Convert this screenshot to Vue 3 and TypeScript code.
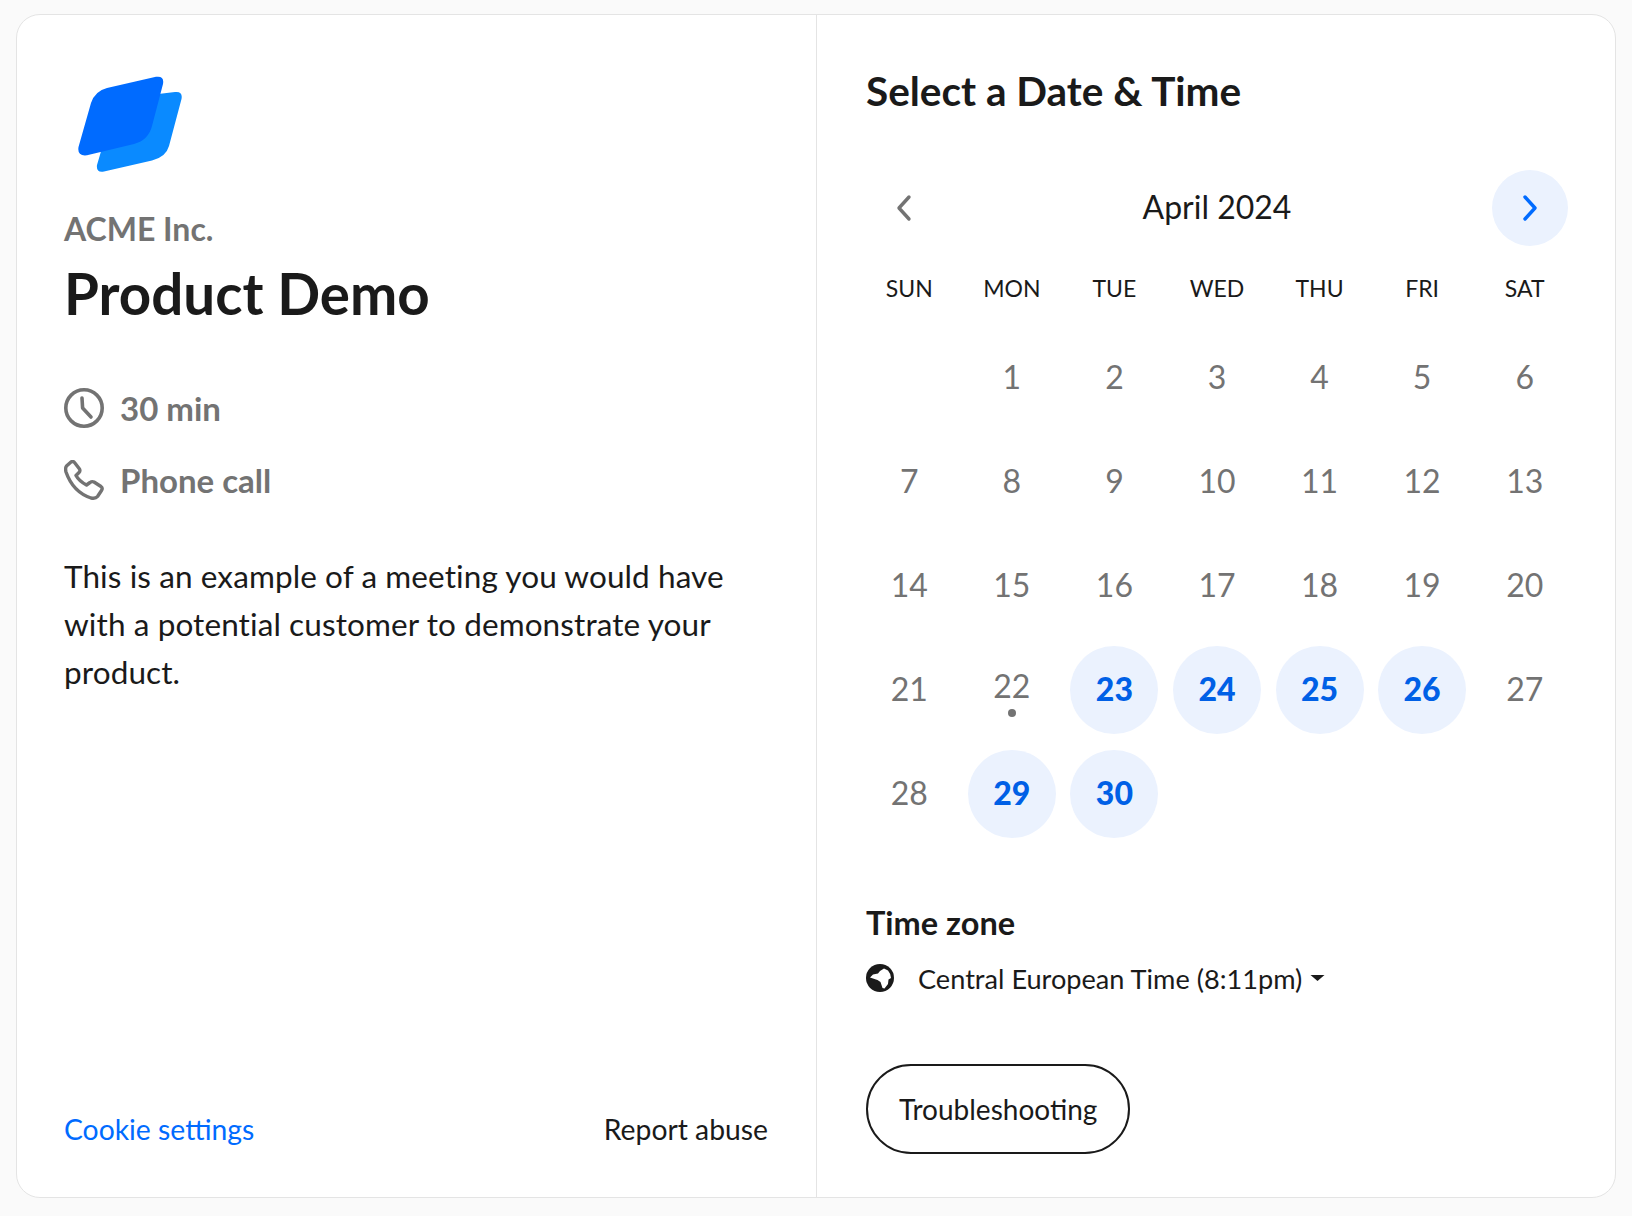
<script setup lang="ts">
interface Day { n: number | null; on?: boolean; today?: boolean }
const weekdays = ['SUN', 'MON', 'TUE', 'WED', 'THU', 'FRI', 'SAT']
const open = [23, 24, 25, 26, 29, 30]
const days: Day[] = [{ n: null }]
for (let n = 1; n <= 30; n++) days.push({ n, on: open.includes(n), today: n === 22 })
</script>

<template>
  <main class="card">
    <section class="info">
      <svg class="logo" width="104" height="96" viewBox="78 76 104 96">
        <path fill="#0a8aff" d="M150 95 L175 92 Q183 91 181.5 99 L169 146 Q166 157 152 160.5 L104 171.5 Q96 173 97 165 L102 148 L150 120 Z" />
        <path fill="#006bff" d="M156 76.8 Q164.5 75.5 163 84 L152 126 Q148.5 140 134 144 L87 155.3 Q77 156.5 78.5 147 L91 103 Q95 91 107 88 Z" />
      </svg>
      <p class="org">ACME Inc.</p>
      <h1 class="name">Product Demo</h1>
      <div class="meta">
        <div class="meta-row">
          <svg width="40" height="40" viewBox="0 0 40 40" fill="none" stroke="#737373" stroke-width="3.6" stroke-linecap="round" stroke-linejoin="round">
            <circle cx="20" cy="20" r="18.2" />
            <path d="M18 10 L18.6 20 L27 29" />
          </svg>
          <span>30 min</span>
        </div>
        <div class="meta-row">
          <svg width="40" height="40" viewBox="0 0 40 40" fill="none" stroke="#737373" stroke-width="3.4" stroke-linecap="round" stroke-linejoin="round">
            <path d="M2.5 6 L7 2 Q9 0.8 10.5 2.5 L15.5 9 Q16.5 11 15 12.5 L12 15.5 Q15 21 22.5 25 L26 22.5 Q28 21 30 22 L37 26.5 Q39 28 37.5 30.5 L33.5 36.5 Q31.5 39 27 38 Q9 32 2 12 Q1 8 2.5 6 Z" />
          </svg>
          <span>Phone call</span>
        </div>
      </div>
      <p class="desc">This is an example of a meeting you would have with a potential customer to demonstrate your product.</p>
      <footer class="links">
        <a class="cookie">Cookie settings</a>
        <a class="report">Report abuse</a>
      </footer>
    </section>

    <section class="picker">
      <h2 class="title">Select a Date &amp; Time</h2>
      <div class="calendar">
        <div class="month">
          <button class="nav">
            <svg width="20" height="28" viewBox="0 0 20 28" fill="none" stroke="#737373" stroke-width="3.4" stroke-linecap="round" stroke-linejoin="round"><path d="M15 3 L5 14 L15 25" /></svg>
          </button>
          <span class="month-label">April 2024</span>
          <button class="nav nav-next">
            <svg width="20" height="28" viewBox="0 0 20 28" fill="none" stroke="#006bff" stroke-width="3.4" stroke-linecap="round" stroke-linejoin="round"><path d="M5 3 L15 14 L5 25" /></svg>
          </button>
        </div>
        <div class="weekdays">
          <span v-for="w in weekdays" :key="w">{{ w }}</span>
        </div>
        <div class="days">
          <div v-for="(d, i) in days" :key="i" class="cell">
            <span v-if="d.n" class="day" :class="{ on: d.on, today: d.today }">{{ d.n }}</span>
          </div>
        </div>
      </div>
      <h3 class="tz-title">Time zone</h3>
      <div class="tz">
        <svg width="28" height="28" viewBox="0 0 28 28">
          <circle cx="14" cy="14" r="14" fill="#1a1a1a" />
          <path fill="#fff" d="M18 4.5 L22 6.5 Q25 10 25 14 L22.5 15.5 L22 20 L18.5 24.5 L16.5 24 L14.5 18 L11.5 16 L4 13.5 L7 10.5 L12 9.5 L14 7 Z" />
        </svg>
        <span class="tz-name">Central European Time (8:11pm)</span>
        <svg class="caret" width="15" height="6" viewBox="0 0 15 6"><path fill="#1a1a1a" d="M0.5 0 H14.5 L7.5 6 Z" /></svg>
      </div>
      <button class="trouble">Troubleshooting</button>
    </section>
  </main>
</template>

<style scoped>
.card {
  box-sizing: border-box;
  display: flex;
  width: 1600px;
  height: 1184px;
  margin: 14px 16px 0;
  background: #fff;
  border: 1.5px solid #e4e4e4;
  border-radius: 24px;
  color: #1a1a1a;
  font-family: Lato, "Open Sans", sans-serif;
}
.info {
  box-sizing: border-box;
  width: 800px;
  flex: none;
  display: flex;
  flex-direction: column;
  padding: 61px 48px 48px 47px;
  border-right: 1.5px solid #e4e4e4;
}
.logo { display: block; margin-left: 14px; }
.org {
  margin: 37px 0 0;
  font-size: 32px;
  line-height: 40px;
  font-weight: 700;
  color: #737373;
}
.name {
  margin: 13px 0 0;
  font-size: 56.5px;
  line-height: 62px;
  font-weight: 700;
}
.meta { margin-top: 64px; display: flex; flex-direction: column; gap: 32px; }
.meta-row {
  display: flex;
  align-items: center;
  gap: 16px;
  height: 40px;
  font-size: 33px;
  font-weight: 700;
  color: #737373;
}
.desc {
  margin: 52px 0 0;
  max-width: 690px;
  font-size: 31.5px;
  letter-spacing: 0.1px;
  line-height: 48px;
}
.links {
  margin-top: auto;
  display: flex;
  justify-content: space-between;
  font-size: 28.3px;
  line-height: 40px;
}
.cookie { color: #006bff; }
.picker {
  flex: 1;
  min-width: 0;
  display: flex;
  flex-direction: column;
  padding: 52px 38px 0 49px;
}
.title {
  margin: 0;
  font-size: 40.5px;
  line-height: 48px;
  font-weight: 700;
}
.calendar { margin: 55px 0 0 -8px; width: 718px; }
.month {
  display: flex;
  align-items: center;
  justify-content: space-between;
  height: 76px;
  font-size: 32px;
}
.month-label { flex: 1; padding-bottom: 3px; text-align: center; }
.nav {
  width: 76px;
  height: 76px;
  margin: 0 8px;
  padding: 0;
  border: 0;
  border-radius: 50%;
  background: transparent;
  display: flex;
  align-items: center;
  justify-content: center;
}
.nav-next { background: #ebf2fe; }
.weekdays {
  display: grid;
  grid-template-columns: repeat(7, 1fr);
  margin-top: 22px;
  text-align: center;
  font-size: 23px;
  line-height: 40px;
}
.days {
  display: grid;
  grid-template-columns: repeat(7, 1fr);
  grid-auto-rows: 104px;
  margin-top: 18px;
}
.cell { display: flex; align-items: center; justify-content: center; }
.day {
  position: relative;
  box-sizing: border-box;
  width: 88px;
  height: 88px;
  padding-bottom: 4px;
  border-radius: 50%;
  display: flex;
  align-items: center;
  justify-content: center;
  font-size: 32px;
  color: #737373;
}
.day.on { background: #ebf2fe; color: #0060e6; font-weight: 900; }
.day.today { padding-bottom: 10px; }
.day.today::after {
  content: "";
  position: absolute;
  left: 40px;
  bottom: 17px;
  width: 8px;
  height: 8px;
  border-radius: 50%;
  background: #737373;
}
.tz-title {
  margin: 57px 0 0;
  font-size: 32.5px;
  line-height: 40px;
  font-weight: 700;
}
.tz {
  display: flex;
  align-items: center;
  margin-top: 15px;
  height: 40px;
  font-size: 27.15px;
}
.tz-name { margin-left: 24px; }
.caret { margin-left: 8px; }
.trouble {
  align-self: flex-start;
  margin-top: 66px;
  height: 90px;
  padding: 0 31px;
  border: 2px solid #1a1a1a;
  border-radius: 45px;
  background: #fff;
  color: #1a1a1a;
  font-family: inherit;
  font-size: 28px;
}
</style>

<style>
html, body { background: #fafafa; }
</style>
